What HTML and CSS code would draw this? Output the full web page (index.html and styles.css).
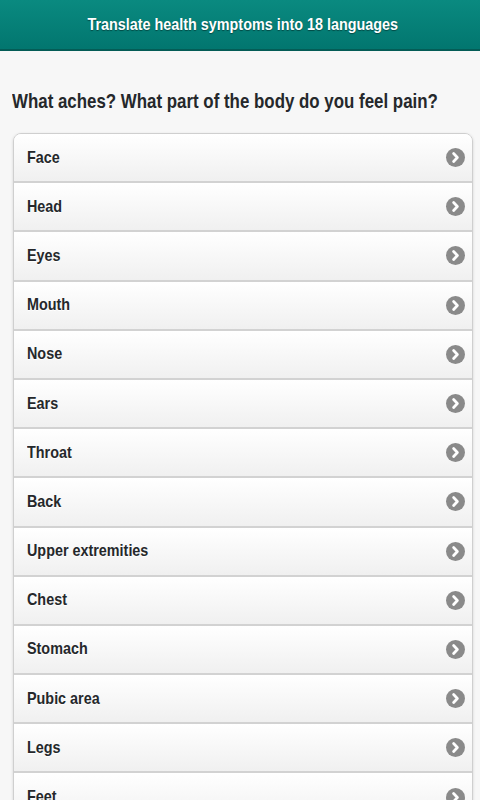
FILE: index.html
```html
<!DOCTYPE html>
<html>
<head>
<meta charset="utf-8">
<link rel="stylesheet" href="styles.css">
</head>
<body>
<header class="bar"><h1 class="bar-title"><span class="squeeze">Translate health symptoms into 18 languages</span></h1></header>
<main class="content">
  <h2 class="question"><span class="squeeze">What aches? What part of the body do you feel pain?</span></h2>
  <ul class="list">
    <li class="item"><span class="label">Face</span><span class="arrow"><svg viewBox="0 0 18 18"><path d="M7.2 5.2 L10.8 9 L7.2 12.8" /></svg></span></li>
    <li class="item"><span class="label">Head</span><span class="arrow"><svg viewBox="0 0 18 18"><path d="M7.2 5.2 L10.8 9 L7.2 12.8" /></svg></span></li>
    <li class="item"><span class="label">Eyes</span><span class="arrow"><svg viewBox="0 0 18 18"><path d="M7.2 5.2 L10.8 9 L7.2 12.8" /></svg></span></li>
    <li class="item"><span class="label">Mouth</span><span class="arrow"><svg viewBox="0 0 18 18"><path d="M7.2 5.2 L10.8 9 L7.2 12.8" /></svg></span></li>
    <li class="item"><span class="label">Nose</span><span class="arrow"><svg viewBox="0 0 18 18"><path d="M7.2 5.2 L10.8 9 L7.2 12.8" /></svg></span></li>
    <li class="item"><span class="label">Ears</span><span class="arrow"><svg viewBox="0 0 18 18"><path d="M7.2 5.2 L10.8 9 L7.2 12.8" /></svg></span></li>
    <li class="item"><span class="label">Throat</span><span class="arrow"><svg viewBox="0 0 18 18"><path d="M7.2 5.2 L10.8 9 L7.2 12.8" /></svg></span></li>
    <li class="item"><span class="label">Back</span><span class="arrow"><svg viewBox="0 0 18 18"><path d="M7.2 5.2 L10.8 9 L7.2 12.8" /></svg></span></li>
    <li class="item"><span class="label">Upper extremities</span><span class="arrow"><svg viewBox="0 0 18 18"><path d="M7.2 5.2 L10.8 9 L7.2 12.8" /></svg></span></li>
    <li class="item"><span class="label">Chest</span><span class="arrow"><svg viewBox="0 0 18 18"><path d="M7.2 5.2 L10.8 9 L7.2 12.8" /></svg></span></li>
    <li class="item"><span class="label">Stomach</span><span class="arrow"><svg viewBox="0 0 18 18"><path d="M7.2 5.2 L10.8 9 L7.2 12.8" /></svg></span></li>
    <li class="item"><span class="label">Pubic area</span><span class="arrow"><svg viewBox="0 0 18 18"><path d="M7.2 5.2 L10.8 9 L7.2 12.8" /></svg></span></li>
    <li class="item"><span class="label">Legs</span><span class="arrow"><svg viewBox="0 0 18 18"><path d="M7.2 5.2 L10.8 9 L7.2 12.8" /></svg></span></li>
    <li class="item"><span class="label">Feet</span><span class="arrow"><svg viewBox="0 0 18 18"><path d="M7.2 5.2 L10.8 9 L7.2 12.8" /></svg></span></li>
  </ul>
</main>
</body>
</html>
```
FILE: styles.css
```css
html, body {
  margin: 0;
  padding: 0;
  background: #f7f7f7;
  font-family: "Liberation Sans", Arial, sans-serif;
  overflow: hidden;
  height: 800px;
}
.bar {
  height: 49px;
  background: linear-gradient(#0a8a80, #02766f);
  border-bottom: 2px solid #045c56;
  display: flex;
  align-items: center;
  justify-content: center;
}
.bar-title {
  margin: 0;
  color: #fff;
  font-size: 17px;
  font-weight: bold;
  text-shadow: 0 1px 1px #034a45;
  white-space: nowrap;
}
.bar-title .squeeze {
  display: inline-block;
  transform: translateX(3px) scaleX(0.845);
  transform-origin: center center;
}
.content {
  padding: 38px 7px 0 13px;
}
.question {
  margin: 0 0 20px -1px;
  font-size: 21px;
  font-weight: bold;
  color: #25282b;
  line-height: 24px;
  white-space: nowrap;
  overflow: hidden;
}
.question .squeeze {
  display: inline-block;
  transform: scaleX(0.804);
  transform-origin: left center;
}
.list {
  list-style: none;
  margin: 0;
  padding: 0;
  border: 1px solid #cfcfcf;
  border-radius: 8px;
  box-shadow: 0 1px 3px rgba(0,0,0,0.15);
  overflow: hidden;
}
.item {
  height: 47.2px;
  display: flex;
  align-items: center;
  justify-content: space-between;
  padding: 0 7.5px 0 13px;
  background: linear-gradient(#ffffff, #f0f0f0);
  border-bottom: 2px solid #d2d2d2;
}
.label {
  display: inline-block;
  font-size: 17px;
  font-weight: bold;
  color: #25282b;
  text-shadow: 0 1px 0 #fff;
  transform: scaleX(0.845);
  transform-origin: left center;
  white-space: nowrap;
}
.arrow {
  width: 19px;
  height: 19px;
  border-radius: 50%;
  background: #8a8a8a;
  display: flex;
}
.arrow svg {
  width: 19px;
  height: 19px;
  fill: none;
  stroke: #fff;
  stroke-width: 2.6;
  stroke-linecap: round;
  stroke-linejoin: round;
}
```
